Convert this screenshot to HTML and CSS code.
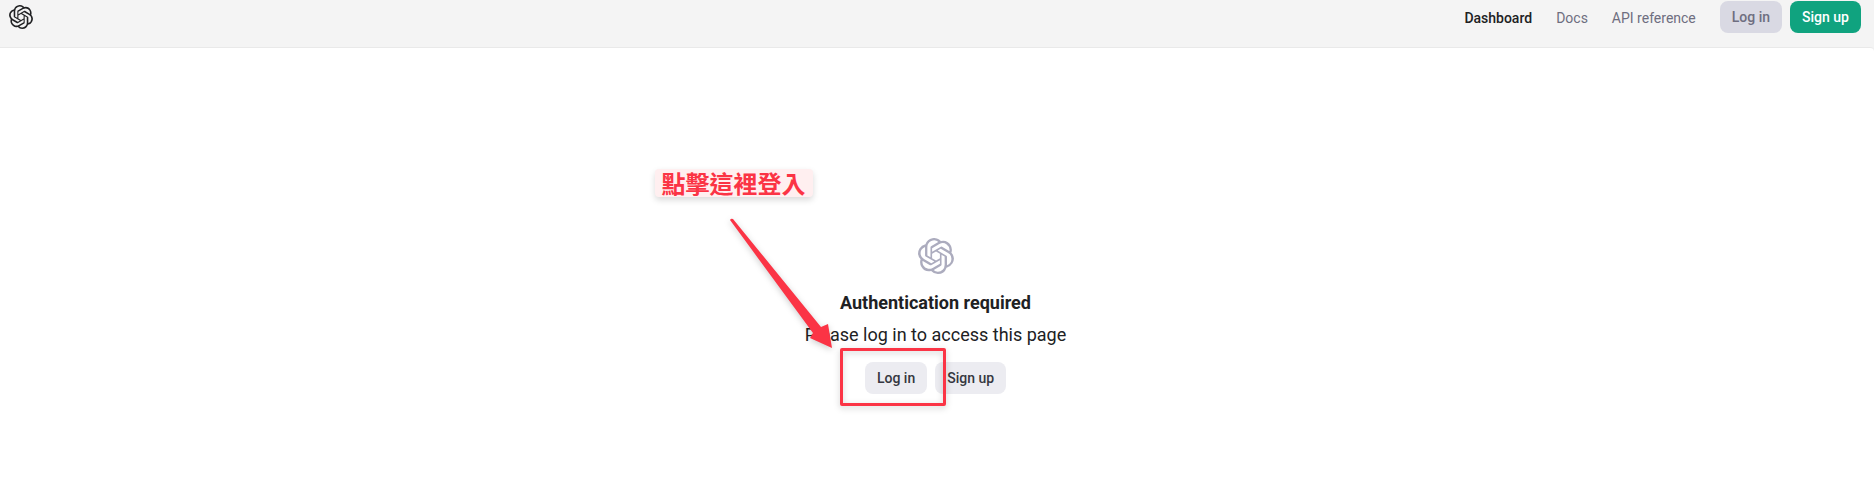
FILE: index.html
```html
<!DOCTYPE html>
<html lang="en">
<head>
<meta charset="utf-8">
<meta name="viewport" content="width=device-width, initial-scale=1">
<title>Authentication required</title>
<link rel="stylesheet" href="styles.css">
</head>
<body>
<svg class="symbols" aria-hidden="true">
  <symbol id="logo" viewBox="0 0 24 24"><path d="M22.2819 9.8211a5.9847 5.9847 0 0 0-.5157-4.9108 6.0462 6.0462 0 0 0-6.5098-2.9A6.0651 6.0651 0 0 0 4.9807 4.1818a5.9847 5.9847 0 0 0-3.9977 2.9 6.0462 6.0462 0 0 0 .7427 7.0966 5.98 5.98 0 0 0 .511 4.9107 6.051 6.051 0 0 0 6.5146 2.9001A5.9847 5.9847 0 0 0 13.2599 24a6.0557 6.0557 0 0 0 5.7718-4.2058 5.9894 5.9894 0 0 0 3.9977-2.9001 6.0557 6.0557 0 0 0-.7475-7.0729zm-9.022 12.6081a4.4755 4.4755 0 0 1-2.8764-1.0408l.1419-.0804 4.7783-2.7582a.7948.7948 0 0 0 .3927-.6813v-6.7369l2.02 1.1686a.071.071 0 0 1 .038.052v5.5826a4.504 4.504 0 0 1-4.4945 4.4944zm-9.6607-4.1254a4.4708 4.4708 0 0 1-.5346-3.0137l.142.0852 4.783 2.7582a.7712.7712 0 0 0 .7806 0l5.8428-3.3685v2.3324a.0804.0804 0 0 1-.0332.0615L9.74 19.9502a4.4992 4.4992 0 0 1-6.1408-1.6464zM2.3408 7.8956a4.485 4.485 0 0 1 2.3655-1.9728V11.6a.7664.7664 0 0 0 .3879.6765l5.8144 3.3543-2.0201 1.1685a.0757.0757 0 0 1-.071 0l-4.8303-2.7865A4.504 4.504 0 0 1 2.3408 7.872zm16.5963 3.8558L13.1038 8.364 15.1192 7.2a.0757.0757 0 0 1 .071 0l4.8303 2.7913a4.4944 4.4944 0 0 1-.6765 8.1042v-5.6772a.79.79 0 0 0-.407-.667zm2.0107-3.0231l-.142-.0852-4.7735-2.7818a.7759.7759 0 0 0-.7854 0L9.409 9.2297V6.8974a.0662.0662 0 0 1 .0284-.0615l4.8303-2.7866a4.4992 4.4992 0 0 1 6.6802 4.66zM8.3065 12.863l-2.02-1.1638a.0804.0804 0 0 1-.038-.0567V6.0742a4.4992 4.4992 0 0 1 7.3757-3.4537l-.142.0805L8.704 5.459a.7948.7948 0 0 0-.3927.6813zm1.0976-2.3654l2.602-1.4998 2.6069 1.4998v2.9994l-2.5974 1.4997-2.6067-1.4997Z"/></symbol>
</svg>
<header class="topbar">
  <a class="brand" href="#" aria-label="Home"><svg class="brand-logo" aria-hidden="true"><use href="#logo"/></svg></a>
  <nav class="nav">
    <a class="nav-link nav-link-active" href="#">Dashboard</a>
    <a class="nav-link" href="#">Docs</a>
    <a class="nav-link" href="#">API reference</a>
  </nav>
  <div class="actions">
    <button class="btn btn-muted" type="button">Log in</button>
    <button class="btn btn-primary" type="button">Sign up</button>
  </div>
</header>
<main class="panel">
  <section class="auth">
    <svg class="auth-logo" aria-hidden="true"><use href="#logo"/></svg>
    <h1 class="auth-title">Authentication required</h1>
    <p class="auth-text">Please log in to access this page</p>
    <div class="actions">
      <button class="btn" type="button">Log in</button>
      <button class="btn" type="button">Sign up</button>
    </div>
    <div class="callout" lang="zh-Hant">點擊這裡登入</div>
    <svg class="arrow" viewBox="0 0 110 140" aria-hidden="true"><path d="M4 6 Q5 4 7 5 L95 113 L102 110 L106 134 L84 124 L87 119 Z"/></svg>
    <div class="highlight"></div>
  </section>
</main>
</body>
</html>
```
FILE: styles.css
```css
* {
  box-sizing: border-box;
}

body {
  margin: 0;
  min-height: 100vh;
  display: flex;
  flex-direction: column;
  background: #f3f3f3;
  color: #202123;
  font-family: Roboto, "Liberation Sans", sans-serif;
  font-size: 14px;
}

.symbols {
  position: absolute;
  width: 0;
  height: 0;
}

.topbar {
  display: flex;
  align-items: flex-start;
  padding: 1px 13px 12px 9px;
  background: #f4f4f4;
}

.brand {
  display: flex;
  margin-right: auto;
  padding-top: 4px;
  color: #202123;
}

.brand-logo {
  width: 24px;
  height: 24px;
  fill: currentColor;
}

.nav {
  display: flex;
  gap: 24px;
  margin-right: 24px;
  line-height: 34px;
}

.nav-link {
  color: #6e6e80;
  text-decoration: none;
}

.nav-link-active {
  color: #202123;
  font-weight: 500;
}

.actions {
  display: flex;
  gap: 8px;
}

.btn {
  height: 32px;
  padding: 0 12px;
  border: 0;
  border-radius: 8px;
  background: #ececf1;
  color: #353740;
  font: inherit;
  font-weight: 500;
}

.btn-muted {
  background: #d9d9e3;
  color: #6e6e80;
}

.btn-primary {
  background: #10a37f;
  color: #fff;
}

.panel {
  flex: 1;
  display: flex;
  justify-content: center;
  align-items: flex-start;
  padding: 190px 3px 48px 0;
  border-top: 1px solid #e9e9e9;
  border-top-right-radius: 4px;
  background: #fff;
}

.auth {
  position: relative;
  display: flex;
  flex-direction: column;
  align-items: center;
  font-size: 18px;
  line-height: 28px;
}

.auth .btn {
  font-size: 14px;
}

.auth-logo {
  width: 36px;
  height: 36px;
  fill: #acacbe;
}

.auth-title {
  margin: 15px 0 4px;
  font-size: 18px;
  font-weight: 700;
}

.auth-text {
  margin: 0 0 13px;
}

.callout {
  position: absolute;
  top: -69px;
  left: calc(50% - 281px);
  padding: 0 7px;
  border-radius: 4px;
  background: #ffeff0;
  box-shadow: 0 3px 6px rgba(0, 0, 0, 0.15);
  color: #fb3445;
  font-family: "Noto Sans CJK TC", sans-serif;
  font-size: 24px;
  font-weight: 700;
  white-space: nowrap;
}

.arrow {
  position: absolute;
  top: -24px;
  left: calc(50% - 210px);
  width: 110px;
  height: 140px;
  fill: #fb3445;
  filter: drop-shadow(0 2px 3px rgba(0, 0, 0, 0.2));
}

.highlight {
  position: absolute;
  top: 110px;
  left: calc(50% - 96px);
  width: 106px;
  height: 58px;
  border: 3px solid #fb3445;
  border-radius: 2px;
  filter: drop-shadow(0 2px 3px rgba(0, 0, 0, 0.2));
  pointer-events: none;
}
```
